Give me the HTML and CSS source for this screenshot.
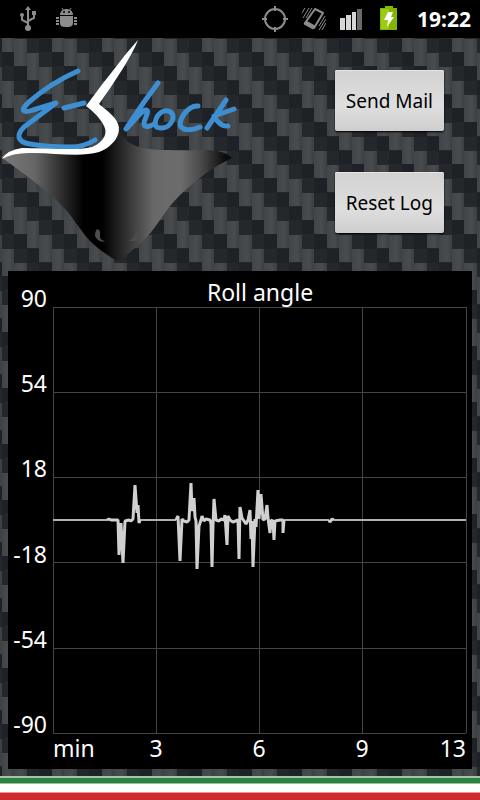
FILE: index.html
```html
<!DOCTYPE html>
<html lang="en">
<head>
    <meta charset="UTF-8">
    <meta name="viewport" content="width=device-width, initial-scale=1.0">
    <title>E-Shock</title>
    <link rel="stylesheet" href="styles.css">
</head>
<body>
    <div class="status-bar">
        <div class="status-icons">
            <svg class="status-icon" viewBox="0 0 26 26" fill="none" stroke="#8c8c8c" stroke-width="2" aria-label="USB">
                <path d="M12 22V4M12 17L6 14V10M12 15L18 12V8"/>
                <path d="M12 0l3 4H9z" fill="#8c8c8c" stroke="none"/>
                <circle cx="12" cy="22" r="3" fill="#8c8c8c" stroke="none"/>
                <circle cx="6" cy="9" r="2" fill="#8c8c8c" stroke="none"/>
                <path d="M16 5h4v4h-4z" fill="#8c8c8c" stroke="none"/>
            </svg>
            <svg class="status-icon" viewBox="0 0 26 26" fill="#8c8c8c" aria-label="USB debugging">
                <path d="M6 9c0-8 13-8 13 0z"/>
                <path d="M6 10h13v7q0 4-5 4h-3q-5 0-5-4z"/>
                <path d="M8 2l2 3M17 2l-2 3" stroke="#8c8c8c" stroke-width="1"/>
                <path d="M2 12h3M2 15h3M2 18h3M20 12h3M20 15h3M20 18h3" stroke="#8c8c8c" stroke-width="2"/>
                <circle cx="10" cy="6" r="1" fill="#000"/>
                <circle cx="15" cy="6" r="1" fill="#000"/>
            </svg>
        </div>
        <div class="status-icons">
            <svg class="status-icon" viewBox="0 0 26 26" fill="none" stroke="#8c8c8c" stroke-width="2" aria-label="GPS">
                <circle cx="13" cy="13" r="10"/>
                <path d="M13 0v5M13 21v5M0 13h5M21 13h5"/>
            </svg>
            <svg class="status-icon" viewBox="0 0 26 26" fill="none" stroke="#8c8c8c" aria-label="Vibrate">
                <path d="M15 3l8 4-9 15-9-5z" stroke-width="2" stroke-linejoin="round"/>
                <path d="M6 15l9 5-2 3-9-5z" fill="#8c8c8c"/>
                <path d="M5 2L2 7M9 2L3 12M12 2L6 12M25 10l-6 10M26 13l-7 11M26 17l-4 7" stroke-width="1"/>
            </svg>
            <svg class="status-icon" viewBox="0 0 26 26" aria-label="Signal">
                <path d="M2 12h5v12H2zM8 9h5v15H8zM14 6h4v18h-4z" fill="#d6d6d6"/>
                <path d="M19 3h5v21h-5z" fill="#6a6a6a"/>
            </svg>
            <svg class="status-icon" viewBox="0 0 26 26" aria-label="Battery charging">
                <path d="M9 0h8v2h4v22H4V2h5z" fill="#83b600"/>
                <path d="M5 3h8v20H5z" fill="#99ce10"/>
                <path d="M12 6h5l-2 5h3l-7 10 1-7H8z" fill="#fff"/>
            </svg>
            <span class="clock">19:22</span>
        </div>
    </div>

    <div class="header">
        <svg class="logo" viewBox="0 38 240 226" role="img" aria-label="E-Shock">
            <defs>
                <linearGradient id="wing" gradientUnits="userSpaceOnUse" x1="0" y1="0" x2="232" y2="0">
                    <stop offset="0.03" stop-color="#777"/>
                    <stop offset="0.15" stop-color="#666"/>
                    <stop offset="0.26" stop-color="#303030"/>
                    <stop offset="0.36" stop-color="#000"/>
                    <stop offset="0.44" stop-color="#000"/>
                    <stop offset="0.57" stop-color="#3d3d3d"/>
                    <stop offset="0.66" stop-color="#686868"/>
                    <stop offset="0.78" stop-color="#6c6c6c"/>
                    <stop offset="0.87" stop-color="#484848"/>
                    <stop offset="0.97" stop-color="#0c0c0c"/>
                </linearGradient>
            </defs>
            <path d="M1 157Q12 149 40 150H85Q108 148 119 131C128 148 145 150 170 150C195 151 205 149 217 151Q228 153 232 158C212 167 194 182 180 195C164 211 158 226 144 240Q132 250 122 260Q118 262 112 258Q98 249 90 241C76 225 70 212 58 202C42 186 20 171 1 157z" fill="url(#wing)"/>
            <path d="M97 229q-4 6 0 10q4 4 8 2q-6-1-5-6q1-5-3-6zM135 229q2 7-6 12h9q3-6-3-12z" fill="#4c4c4c"/>
            <g fill="none" stroke="#3d8fd1" stroke-width="5" stroke-linecap="round" stroke-linejoin="round">
                <path d="M78 71C62 78 44 89 29 102C20 110 22 114 33 110L56 103L24 127C16 135 17 142 30 144C46 147 60 147 70 147Q84 147 95 140"/>
                <path d="M64 108L84 103"/>
                <path d="M158 83L144 102L126 129C134 121 142 110 146 110C151 111 141 123 145 126Q148 128 154 124"/>
                <path d="M168 111C157 109 150 128 160 128C172 129 178 113 168 111z"/>
                <path d="M198 106C188 105 177 121 181 127C185 131 193 130 200 127"/>
                <path d="M226 100L207 128M234 109L214 116Q220 127 228 126"/>
            </g>
            <path d="M138 40C133 54 113 85 99 104C106 110 115 116 118 124C122 134 113 147 99 152C79 158 51 152 29 153Q12 153 2 159Q7 150 22 148C46 148 76 151 92 147C104 142 108 133 104 126C101 119 93 111 86 106C99 88 116 67 125 55z" fill="#fff"/>
        </svg>
        <div class="actions">
            <button type="button" class="btn">Send Mail</button>
            <button type="button" class="btn">Reset Log</button>
        </div>
    </div>

    <div class="chart">
        <svg class="plot" viewBox="0 0 464 498" role="img" aria-label="Roll angle">
            <!-- grid -->
            <path class="grid-line" d="M45 36H458M45 121H458M45 206H458M45 291H458M45 377H458M45 462H458M45 36V462M148 36V462M251 36V462M354 36V462M458 36V462"/>
            <!-- roll angle samples -->
            <path class="series flat" d="M45 249H99M132 249H168M276 249H321M326 249H458"/>
            <path class="series" d="M99 249L101 248L103 249H110L111 284L113 252L115 292L117 250L121 249L123 250L125 248L127 214L129 242L130 234L131 252L132 249"/>
            <path class="series" d="M168 249L170 245L172 290L174 248L176 250L179 251L181 249L183 212L184 240L186 227L187 246L188 250L189 298L191 255L193 249L194 245L196 250L198 248L202 249L203 253L204 296L205 255L206 228L208 249L211 250L213 248L216 249L217 244L219 274L220 245L222 249L225 251L230 249L231 288L232 236L234 247L238 253L240 249L242 239L243 268L244 250L245 296L247 248L248 256L250 219L251 248L253 223L255 249L257 248L259 234L260 247L262 262L263 249L265 250L266 269L267 250L272 249H275V262L276 249"/>
            <path class="series" d="M321 249L322 251L324 248L326 249"/>
            <text class="middle" x="252" y="30">Roll angle</text>
            <g class="end">
                <text x="39" y="36">90</text>
                <text x="39" y="121">54</text>
                <text x="39" y="206">18</text>
                <text x="39" y="292">-18</text>
                <text x="39" y="377">-54</text>
                <text x="39" y="462">-90</text>
            </g>
            <text x="45" y="486">min</text>
            <g class="middle">
                <text x="148" y="486">3</text>
                <text x="251" y="486">6</text>
                <text x="354" y="486">9</text>
            </g>
            <text class="end" x="458" y="486">13</text>
        </svg>
    </div>

    <div class="flag"></div>
</body>
</html>
```
FILE: styles.css
```css
* {
    box-sizing: border-box;
}

body {
    margin: 0;
    min-height: 100vh;
    display: flex;
    flex-direction: column;
    font-family: "Noto Sans", "Open Sans", sans-serif;
    color: #fff;
    /* carbon fibre weave */
    background-color: #24282b;
    background-image: url("data:image/svg+xml,%3Csvg xmlns='http://www.w3.org/2000/svg' width='50' height='56'%3E%3Cdefs%3E%3ClinearGradient id='a'%3E%3Cstop stop-color='%23414548'/%3E%3Cstop offset='.6' stop-color='%23484c4f'/%3E%3Cstop offset='1' stop-color='%233b3f42'/%3E%3C/linearGradient%3E%3C/defs%3E%3Cpath fill='%231e2226' d='M0 27h12v14H0zM12 41h13v15H12zM25 0h12v14H25zM37 14h13v13H37z'/%3E%3Cg fill='url(%23a)'%3E%3Cpath d='M0 0h12v27H0z'/%3E%3Cpath d='M12 14h13v27H12z'/%3E%3Cpath d='M25 28h12v27H25z'/%3E%3Cpath d='M37 42h13v14H37z'/%3E%3Cpath d='M37 0h13v13H37z'/%3E%3C/g%3E%3C/svg%3E");
    background-position: 2px 25px;
}

.status-bar {
    display: flex;
    justify-content: space-between;
    align-items: center;
    height: 38px;
    padding: 0 9px 0 16px;
    background: #000;
}

.status-icons {
    display: flex;
    align-items: center;
    gap: 12px;
}

.status-icon {
    width: 26px;
    height: 26px;
}

.clock {
    margin-left: 3px;
    font-size: 21px;
    font-weight: bold;
}

.header {
    display: flex;
    justify-content: space-between;
    align-items: flex-start;
    padding-right: 36px;
}

.logo {
    width: 240px;
    height: 226px;
}

.actions {
    display: flex;
    flex-direction: column;
    align-items: flex-end;
    gap: 41px;
    padding-top: 32px;
}

.btn {
    height: 61px;
    padding: 0 11px;
    border: none;
    border-radius: 2px;
    background: linear-gradient(#d2d2d2, #dedede 60%, #cecece);
    box-shadow: 0 1px 2px #000, inset 0 1px 0 #e6e6e6;
    color: #000;
    font-family: inherit;
    font-size: 19px;
    cursor: pointer;
}

.btn:active {
    background: #f0a020;
}

.chart {
    margin: 7px 8px;
    background: #000;
}

.plot {
    display: block;
    width: 100%;
    fill: #fff;
    font-size: 23px;
}

.grid-line {
    fill: none;
    stroke: #444;
    shape-rendering: crispEdges;
}

.series {
    fill: none;
    stroke: #d0d0d0;
    stroke-width: 3;
    stroke-linejoin: bevel;
}

.flat {
    stroke: #b0b0b0;
    stroke-width: 2;
}

.middle {
    text-anchor: middle;
}

.end {
    text-anchor: end;
}

.flag {
    height: 24px;
    margin-top: auto;
    background: linear-gradient(#a5c4aa 2px, #2c8040 2px, #2c8040 7px, #fff 8px, #fff 16px, #d02c30 17px);
}
```
